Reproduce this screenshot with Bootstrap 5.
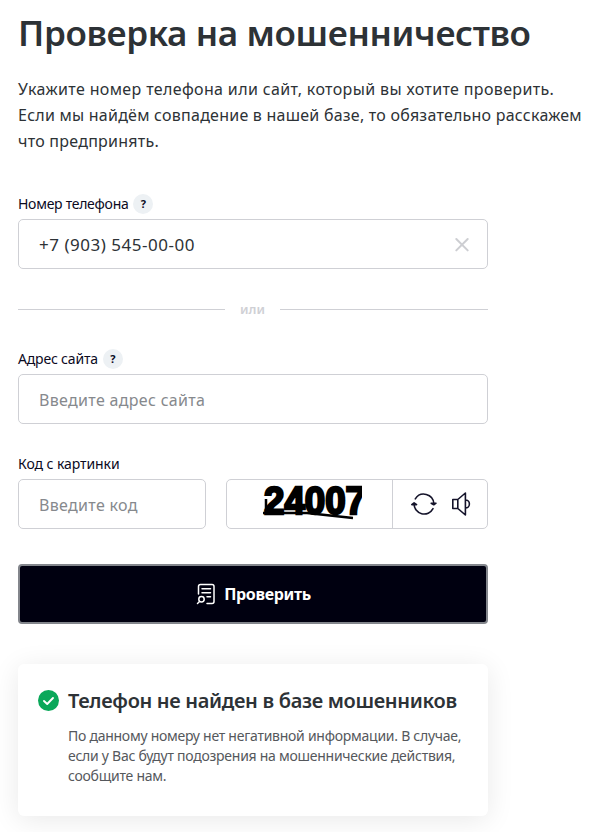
<!DOCTYPE html>
<html lang="ru">
<head>
<meta charset="utf-8">
<meta name="viewport" content="width=device-width, initial-scale=1">
<title>Проверка на мошенничество</title>
<link rel="stylesheet" href="https://cdn.jsdelivr.net/npm/bootstrap@5.3.0/dist/css/bootstrap.min.css">
<style>
body{font-family:"Noto Sans","Open Sans",sans-serif;color:#2d3236;background:#fff}
.page{padding:0 0 0 18px;min-height:832px;overflow:hidden}
.form-col{width:470px}
.title{font-size:35px;font-weight:600;line-height:44px;padding-top:11px;margin:0;letter-spacing:-.36px;white-space:nowrap}
.intro{font-size:16px;line-height:26px;margin:21px 0 0;white-space:nowrap}
.l1{letter-spacing:.36px}
.l2{letter-spacing:.24px}
.l3{letter-spacing:.25px}
.caption{font-size:14px;line-height:20px;height:20px;color:#0b0a1e;gap:5px;margin-bottom:5px;white-space:nowrap}
.cap-phone{margin-top:40px;letter-spacing:-.28px}
.cap-site{margin-top:32px;letter-spacing:-.18px}
.cap-code{margin-top:30px;letter-spacing:-.07px}
.hint{width:20px;height:20px;border-radius:50%;background:#edf1f4;font-size:11px;font-weight:700;line-height:20px;text-align:center;letter-spacing:0}
.field{height:50px;border:1px solid #cfd0d5;border-radius:5px;background:#fff}
.field .form-control{font-size:16px;line-height:24px;padding:1px 20px 0;border:0;height:48px;box-shadow:none;background:transparent;color:#2d3236;letter-spacing:.32px}
.field .form-control.phone{font-size:17px;letter-spacing:.52px}
.field .form-control::placeholder{color:#86898d;opacity:1}
.code-field{width:188px}
.code-row{gap:20px}
.or{height:16px;font-size:13px;font-weight:600;line-height:16px;color:#cfd0d5;margin-top:32px}
.or i{height:1px;background:#cfd0d5;width:207px}
.or i:last-child{width:208px}
.submit{height:60px;background:#000010;color:#fff;border:2px solid #83868c;border-radius:4px;font-size:16px;font-weight:700;padding:0 0 0 1px;gap:8px;margin-top:35px}
.submit:hover{background:#000010;color:#fff;border-color:#83868c}
.go{letter-spacing:-.33px}
.result{width:470px;height:152px;border-radius:6px;background:#fff;box-shadow:0 4px 28px rgba(0,0,0,.09);padding:20px 0 0 20px;margin-top:40px}
.result h2{font-size:20px;font-weight:600;line-height:32px;padding-top:1px;margin:0;letter-spacing:-.33px;white-space:nowrap}
.result p{font-size:14px;line-height:20px;margin:9px 0 0;color:#55585c;letter-spacing:-.26px;white-space:nowrap}
.captcha{font-family:"Liberation Sans",Arial,sans-serif;font-weight:700;font-size:38px}
.tools{border-left:1px solid #cfd0d5}
</style>
</head>
<body>
<main class="page">
  <h1 class="title">Проверка на мошенничество</h1>
  <p class="intro"><span class="l1">Укажите номер телефона или сайт, который вы хотите проверить.</span><br><span class="l2">Если мы найдём совпадение в нашей базе, то обязательно расскажем</span><br><span class="l3">что предпринять.</span></p>
  <form class="form-col">
    <div class="caption cap-phone d-flex align-items-center"><label for="phone">Номер телефона</label><span class="hint">?</span></div>
    <div class="field d-flex align-items-center">
      <input id="phone" class="form-control phone" value="+7 (903) 545-00-00">
      <svg class="flex-shrink-0 me-3" width="18" height="18" viewBox="0 0 18 18" fill="none" stroke="#cdced2" stroke-width="2" stroke-linecap="round"><path d="M3.3 4l11.4 11.4M14.7 4l-11.4 11.4"/></svg>
    </div>
    <div class="or d-flex align-items-center justify-content-between"><i></i><span>или</span><i></i></div>
    <div class="caption cap-site d-flex align-items-center"><label for="site">Адрес сайта</label><span class="hint">?</span></div>
    <div class="field"><input id="site" class="form-control" placeholder="Введите адрес сайта"></div>
    <div class="caption cap-code d-flex align-items-center"><label for="code">Код с картинки</label></div>
    <div class="code-row d-flex">
      <div class="field code-field"><input id="code" class="form-control" placeholder="Введите код"></div>
      <div class="field d-flex flex-grow-1">
        <svg width="165" height="48" viewBox="227 480 165 48" class="flex-shrink-0">
          <defs><clipPath id="edge"><rect x="255" y="480" width="107" height="48"/></clipPath></defs>
          <g clip-path="url(#edge)">
            <text class="captcha" x="264" y="514" textLength="102" lengthAdjust="spacingAndGlyphs" stroke="#000" stroke-width="2.4">24007</text>
            <path d="M266 499v14M263 513h44l46 5" fill="none" stroke="#000" stroke-width="2.5"/>
          </g>
        </svg>
        <div class="tools flex-grow-1">
          <svg width="94" height="48" viewBox="393 480 94 48" fill="none" stroke="#14132a" stroke-width="1.6" stroke-linecap="round" stroke-linejoin="round">
            <path d="M415.3 498.9a10 10 0 0 1 18.5 4.6M433 508.6a10 10 0 0 1-18.9-4.8"/>
            <path d="M431.2 503.2h4.8l-2.2 1.6zM411.8 504.6h4.8l-2.5-1.8z"/>
            <path d="M452.8 499.5h5v9h-5zM457.8 499.5l7.6-6.5v22l-7.6-6.5M465.4 500a4 4 0 0 1 0 8"/>
          </svg>
        </div>
      </div>
    </div>
    <button type="button" class="btn submit w-100 d-flex align-items-center justify-content-center">
      <svg width="20" height="22" viewBox="196 583 20 22" fill="none" stroke="#fff" stroke-width="1.5" stroke-linecap="round" stroke-linejoin="round"><path d="M198.5 594v-7.5a2 2 0 0 1 2-2h11.5a2 2 0 0 1 2 2v15a2 2 0 0 1-2 2h-5M202 588.8h8.5M202 592.8h8.5M207 596.8h3.5"/><circle cx="201.5" cy="599.3" r="2.7"/><path d="M199.5 601.5l-2 2"/></svg>
      <span class="go">Проверить</span>
    </button>
  </form>
  <section class="result d-flex">
    <svg class="flex-shrink-0" width="30" height="32" viewBox="0 0 30 32"><circle cx="10.5" cy="16.5" r="10.5" fill="#0aa85a"/><path d="M6 17l3.2 3 5.8-6" fill="none" stroke="#fff" stroke-width="1.9" stroke-linecap="round" stroke-linejoin="round"/></svg>
    <div><h2>Телефон не найден в базе мошенников</h2>
    <p>По данному номеру нет негативной информации. В случае,<br>если у Вас будут подозрения на мошеннические действия,<br>сообщите нам.</p></div>
  </section>
</main>
<script src="https://cdn.jsdelivr.net/npm/bootstrap@5.3.0/dist/js/bootstrap.bundle.min.js"></script>
</body>
</html>
